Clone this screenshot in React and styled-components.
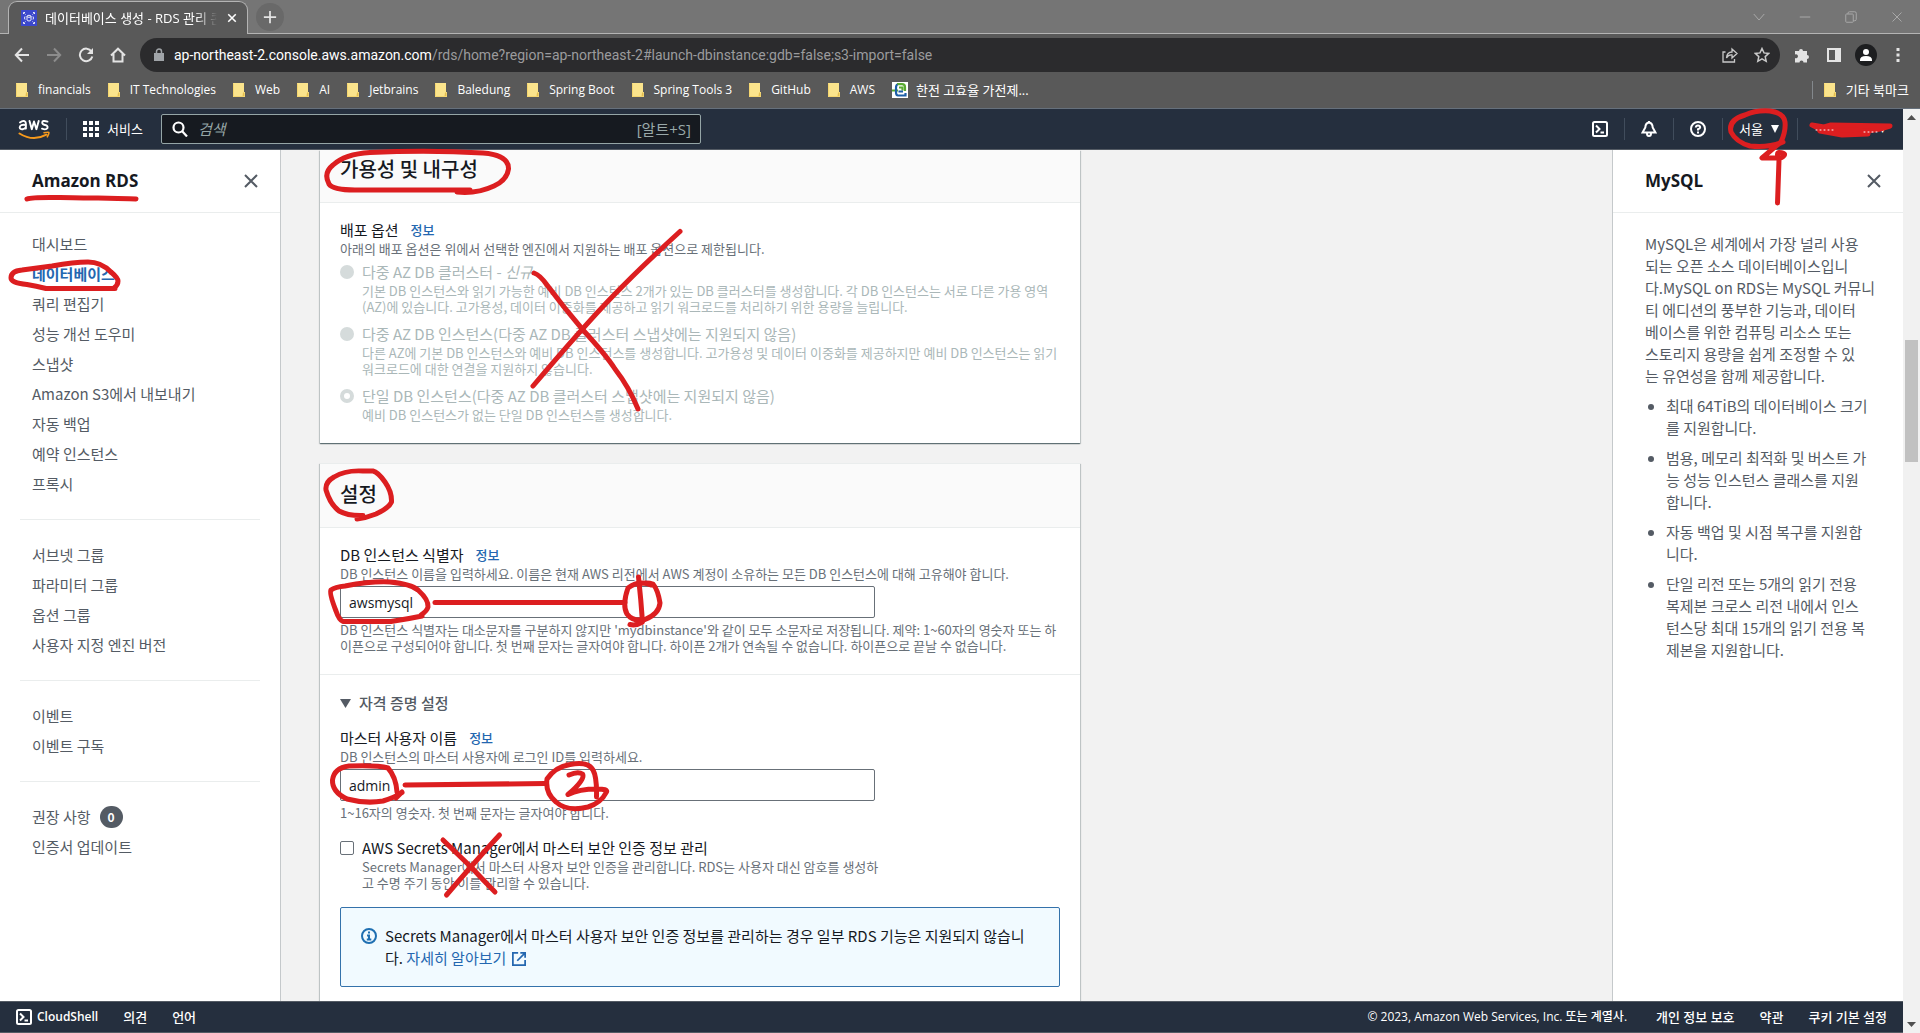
import React from 'react';
import styled, { createGlobalStyle, css } from 'styled-components';

const C = {
  strip: '#757575',
  toolbar: '#595959',
  omnibox: '#2b2b2d',
  nav: '#252f3e',
  navLine: '#414d5c',
  page: '#f2f2f2',
  text: '#16191f',
  body: '#545b64',
  hint: '#687078',
  disabled: '#aab7b8',
  line: '#eaeded',
  link: '#2467b0',
  pen: '#dc1e20',
};

const Global = createGlobalStyle`
  *, *::before, *::after { box-sizing: border-box; }
  body {
    margin: 0;
    overflow: hidden;
    background: ${C.page};
    color: ${C.text};
    font: 15px/22px 'Open Sans', 'Noto Sans CJK KR', sans-serif;
  }
  button, input { font: inherit; color: inherit; }
  button { padding: 0; border: 0; background: none; cursor: pointer; }
  a { text-decoration: none; color: inherit; }
  h1, h2, p, ul { margin: 0; padding: 0; }
  ul { list-style: none; }
  svg { display: block; flex: none; }
`;

const Shell = styled.div`
  position: relative;
  display: flex;
  flex-direction: column;
  height: 100vh;
`;

/* ---------- browser window ---------- */

const TabStrip = styled.div`
  display: flex;
  align-items: center;
  flex: none;
  height: 34px;
  padding: 0 0 0 8px;
  background: ${C.strip};
  border-bottom: 1px solid #b4b4b4;
`;

const Tab = styled.div`
  position: relative;
  display: flex;
  align-items: center;
  gap: 8px;
  width: 240px;
  height: 33px;
  margin: 1px 0 0;
  padding: 0 8px 0 12px;
  background: ${C.toolbar};
  border: 1px solid #b4b4b4;
  border-bottom: 0;
  border-radius: 9px 9px 0 0;
  color: #fff;
  font-size: 13px;
  line-height: 18px;
  &::after {
    content: '';
    position: absolute;
    left: 0;
    right: 0;
    bottom: -1px;
    height: 1px;
    background: ${C.toolbar};
  }
`;

const TabTitle = styled.span`
  flex: 1;
  overflow: hidden;
  white-space: nowrap;
  mask-image: linear-gradient(90deg, #000 88%, transparent);
`;

const IconButton = styled.button`
  display: flex;
  align-items: center;
  justify-content: center;
  flex: none;
  width: ${(p) => p.$w || 32}px;
  height: ${(p) => p.$h || 28}px;
  color: ${(p) => p.$color || '#e4e4e4'};
`;

const NewTab = styled(IconButton)`
  margin-left: 8px;
  border-radius: 50%;
  background: #696969;
`;

const WindowControls = styled.div`
  display: flex;
  margin-left: auto;
`;

const Toolbar = styled.div`
  display: flex;
  align-items: center;
  flex: none;
  height: 42px;
  padding: 0 6px;
  background: ${C.toolbar};
`;

const Omnibox = styled.div`
  display: flex;
  align-items: center;
  flex: 1;
  height: 34px;
  margin: 0 6px;
  padding: 0 2px 0 14px;
  gap: 10px;
  border-radius: 17px;
  background: ${C.omnibox};
  color: #9b9b9d;
  font-family: Roboto, 'Noto Sans CJK KR', sans-serif;
  font-size: 14px;
  line-height: 20px;
`;

const OmniboxActions = styled.div`
  display: flex;
`;

const Url = styled.span`
  flex: 1;
  b { font-weight: 400; color: #fff; }
`;

const Bookmarks = styled.nav`
  display: flex;
  align-items: center;
  gap: 17px;
  flex: none;
  height: 33px;
  padding: 0 11px 4px 16px;
  background: ${C.toolbar};
  border-bottom: 1px solid #66707c;
  color: #fff;
  font-size: 12px;
  line-height: 18px;
`;

const Bookmark = styled.a`
  display: flex;
  align-items: center;
  gap: ${(p) => (p.$site ? 8 : 10)}px;
  white-space: nowrap;
  font-size: ${(p) => (p.$ko ? 13 : 12)}px;
`;

const OtherBookmarks = styled.div`
  margin-left: auto;
  padding-left: 11px;
  border-left: 1px solid #83888c;
`;

const Viewport = styled.div`
  display: flex;
  flex: 1;
  min-height: 0;
`;

const Page = styled.div`
  display: flex;
  flex-direction: column;
  flex: 1;
  min-width: 0;
`;

const ScrollTrack = styled.div`
  display: flex;
  flex-direction: column;
  align-items: center;
  flex: none;
  width: 17px;
  background: #f1f1f1;
  color: #505050;
`;

const ScrollSpace = styled.div`
  flex: ${(p) => p.$grow};
`;

const ScrollThumb = styled.div`
  width: 13px;
  height: 122px;
  background: #c1c1c1;
`;

/* ---------- console navigation ---------- */

const NavBar = styled.header`
  display: flex;
  align-items: center;
  flex: none;
  height: 41px;
  padding: 0 10px 0 18px;
  background: ${C.nav};
  border-bottom: 1px solid #545b64;
  color: #fff;
  font-size: 13px;
`;

const NavDivider = styled.i`
  width: 1px;
  height: 22px;
  margin: 0 ${(p) => p.$space || 16}px;
  background: ${C.navLine};
`;

const NavButton = styled.button`
  display: flex;
  align-items: center;
  gap: 8px;
  padding-right: ${(p) => p.$pad || 0}px;
`;

const Search = styled.label`
  display: flex;
  align-items: center;
  gap: 10px;
  width: 540px;
  height: 30px;
  margin: 0 auto 0 18px;
  padding: 0 9px 0 10px;
  border: 1px solid #95a5a6;
  border-radius: 2px;
  background: #161a20;
  color: #99a8a9;
  font-size: 15px;
`;

const SearchInput = styled.input`
  flex: 1;
  min-width: 0;
  padding: 0;
  border: 0;
  outline: 0;
  background: none;
  font-style: italic;
  &::placeholder { color: #95a5a6; opacity: 1; }
`;

const Account = styled.button`
  width: 83px;
  height: 22px;
  padding-right: 8px;
  text-align: right;
  font-size: 10px;
`;

/* ---------- page columns ---------- */

const Columns = styled.div`
  display: flex;
  flex: 1;
  min-height: 0;
  font-family: 'Noto Sans CJK KR', 'Open Sans', sans-serif;
`;

const SidePanel = styled.aside`
  flex: none;
  width: ${(p) => p.$w}px;
  overflow: hidden;
  background: #fff;
  color: ${C.body};
  ${(p) => (p.$right
    ? css`border-left: 1px solid #c5c9cb;`
    : css`border-right: 1px solid #c5c9cb;`)}
`;

const PanelHead = styled.div`
  display: flex;
  align-items: center;
  justify-content: space-between;
  height: 63px;
  padding: 0 16px 0 32px;
  border-bottom: 1px solid ${C.line};
`;

const PanelTitle = styled.h2`
  color: ${C.text};
  font-family: 'Open Sans', 'Noto Sans CJK KR', sans-serif;
  font-size: 17px;
  line-height: 24px;
  font-weight: 700;
`;

const NavGroup = styled.ul`
  display: grid;
  gap: 8px;
  margin: 0 20px;
  padding: ${(p) => (p.$first ? 20 : 24)}px 0 24px 12px;
  & + & { border-top: 1px solid ${C.line}; }
`;

const NavLink = styled.a`
  display: flex;
  align-items: center;
  gap: 9px;
  height: 22px;
  ${(p) => p.$active && css`color: ${C.link}; font-weight: 700;`}
`;

const Badge = styled.span`
  display: grid;
  place-items: center;
  width: 23px;
  height: 22px;
  border-radius: 11px;
  background: ${C.body};
  color: #fff;
  font-size: 12px;
  line-height: 16px;
  font-weight: 700;
`;

const HelpBody = styled.div`
  display: grid;
  gap: 8px;
  padding: 20px 24px 20px 32px;
`;

const HelpList = styled.ul`
  display: grid;
  gap: 8px;
  padding: 0 8px 0 21px;
  list-style: disc;
`;

const Main = styled.main`
  display: flex;
  flex-direction: column;
  gap: 20px;
  flex: 1;
  min-width: 0;
  overflow: hidden;
  padding: 0 39px;
`;

const Card = styled.section`
  flex: none;
  max-width: 760px;
  background: #fff;
  border-top: ${(p) => (p.$scrolled ? 0 : 1)}px solid ${C.line};
  box-shadow: 0 1px 1px rgba(0, 28, 36, 0.45), 1px 1px 1px rgba(0, 28, 36, 0.15),
    -1px 1px 1px rgba(0, 28, 36, 0.15);
`;

const CardHead = styled.div`
  padding: ${(p) => (p.$scrolled ? 7 : 18)}px 20px 21px;
  background: #fafafa;
  border-bottom: 1px solid ${C.line};
`;

const CardTitle = styled.h2`
  font-size: 20px;
  line-height: 24px;
  font-weight: 500;
`;

const CardBody = styled.div`
  padding: 16px 20px 20px;
  & + & { border-top: 1px solid ${C.line}; }
`;

const LabelRow = styled.div`
  display: flex;
  align-items: center;
  gap: 12px;
  height: 22px;
`;

const InfoLink = styled.a`
  color: ${C.link};
  font-size: 13px;
  font-weight: 500;
`;

const Hint = styled.p`
  color: ${(p) => (p.$off ? C.disabled : C.hint)};
  font-size: 13px;
  line-height: 16px;
`;

const Field = styled.div`
  display: grid;
  gap: 4px;
  margin-top: ${(p) => p.$top || 0}px;
`;

const TextInput = styled.input`
  width: 100%;
  max-width: 535px;
  height: 32px;
  padding: 0 8px;
  border: 1px solid ${C.hint};
  border-radius: 2px;
  background: #fff;
  font-family: 'Open Sans', 'Noto Sans CJK KR', sans-serif;
  font-size: 14px;
`;

const Choices = styled.div`
  display: grid;
  gap: 8px;
`;

const Choice = styled.label`
  display: grid;
  grid-template-columns: 14px 1fr;
  column-gap: 8px;
  align-items: center;
  max-width: ${(p) => (p.$narrow ? '544px' : 'none')};
  margin-top: ${(p) => (p.$narrow ? 16 : 0)}px;
  color: ${(p) => (p.$off ? C.disabled : C.text)};
  ${Hint} { grid-column: 2; }
`;

const Radio = styled.input`
  appearance: none;
  width: 14px;
  height: 14px;
  margin: 0;
  border-radius: 50%;
  background: #d5dbdb;
  &:checked { background: #fff; border: 4px solid #d5dbdb; }
`;

const Check = styled.input`
  appearance: none;
  width: 14px;
  height: 14px;
  margin: 0;
  border: 1px solid ${C.hint};
  border-radius: 2px;
  background: #fff;
`;

const Toggle = styled.button`
  display: flex;
  align-items: center;
  gap: 8px;
  height: 24px;
  color: ${C.body};
  font-weight: 500;
`;

const Alert = styled.div`
  display: flex;
  gap: 8px;
  margin-top: 16px;
  padding: 17px 28px 17px 20px;
  border: 1px solid #3472ab;
  border-radius: 2px;
  background: #f1faff;
`;

const AlertIcon = styled.span`
  padding-top: 3px;
  color: #1f6fb2;
`;

const AlertLink = styled.a`
  color: ${C.link};
  svg { display: inline-block; margin-left: 6px; vertical-align: -2px; }
`;

const Footer = styled.footer`
  display: flex;
  align-items: center;
  gap: 25px;
  flex: none;
  height: 32px;
  padding: 0 16px;
  background: ${C.nav};
  border-top: 1px solid #545b64;
  border-bottom: 1px solid #545b64;
  color: #fff;
  font-size: 12px;
  font-weight: 500;
`;

const Copyright = styled.span`
  margin: 0 4px 0 auto;
`;

const FooterLink = styled.a`
  display: flex;
  align-items: center;
  gap: 5px;
  font-size: ${(p) => (p.$latin ? 12 : 13)}px;
  font-weight: ${(p) => (p.$latin ? 600 : 500)};
`;

const Ink = styled.svg`
  position: absolute;
  top: 0;
  left: 0;
  pointer-events: none;
`;

/* ---------- icons ---------- */

const Icon = ({ size = 16, w = 2, children, ...rest }) => (
  <svg width={size} height={size} viewBox="0 0 16 16" fill="none" stroke="currentColor"
    strokeWidth={w} aria-hidden="true" {...rest}>{children}</svg>
);

const Folder = () => (
  <svg width="12" height="14" viewBox="0 0 12 14" aria-hidden="true">
    <path d="M0 0h11v9h1v5H0z" fill="#fbe48c" />
    <path d="M10 9.5h1.5v4H9.5z" fill="#e3bd4f" />
    <path d="M.5.5v13h11" fill="none" stroke="#f5d66f" />
  </svg>
);

const RdsIcon = () => (
  <svg width="16" height="16" viewBox="0 0 16 16" fill="none" stroke="#fff" aria-hidden="true">
    <rect width="16" height="16" fill="#3b48cc" stroke="none" />
    <path d="M2.500 4V2.500H4M12 2.500h1.500V4M13.500 12v1.500H12M4 13.500H2.500V12M3.500 3.500l1 1M12.500 3.500l-1 1M12.500 12.500l-1-1M3.500 12.500l1-1" strokeWidth=".9" />
    <ellipse cx="8" cy="6.300" rx="2" ry="1" strokeWidth=".9" />
    <path d="M6 6.300v3.700c0 1.300 4 1.300 4 0V6.300M4 6.500Q3 8 4 9.500M12 6.500q1 1.500 0 3" strokeWidth=".9" />
  </svg>
);

const SiteIcon = () => (
  <svg width="16" height="16" viewBox="0 0 16 16" fill="none" aria-hidden="true">
    <rect width="16" height="16" fill="#fff" />
    <path d="M5 2.200h5q3 0 3 3V9" stroke="#5aab32" strokeWidth="2.200" />
    <path d="M0 8.500h6M7 5.500h3.500v3" stroke="#5aab32" strokeWidth="2.200" />
    <path d="M5.500 2.500Q4 3 4 6v4q0 3.500 2 3.500h7.500V11M6.500 9.500h4.500" stroke="#1d5fa8" strokeWidth="2.200" />
  </svg>
);

const Close = ({ size = 16, w = 2 }) => (
  <Icon size={size} w={w}><path d="M2 2l12 12M14 2L2 14" /></Icon>
);

const ShellIcon = ({ w = 2 }) => (
  <Icon w={w}><rect x="1" y="1" width="14" height="14" rx="1.500" /><path d="M4 4.500L7.500 8 4 11.500M8.500 11.500H12" /></Icon>
);

const AwsLogo = () => (
  <svg width="32" height="21" viewBox="0 0 32 21" fill="none" strokeLinecap="round" strokeLinejoin="round" role="img" aria-label="aws">
    <g stroke="#fff" strokeWidth="1.900">
      <path d="M2 3.500Q4.500 1.500 6.500 2.200 8 2.900 7.900 5v4.500M7.900 6Q2 5 1.700 8.300 2 10.800 5 10.200 7 9.700 7.900 7.800" />
      <path d="M11.500 2l2.300 8.200L16 2.500l2.400 7.700L20.700 2" />
      <path d="M29.500 2.600Q24.200.900 24.200 3.700 24.300 5.300 27 6 30.200 6.800 29.500 9 28 11.300 24 9.700" />
    </g>
    <path d="M1.500 14.500Q15 23 28.500 15.700" stroke="#f79a1c" strokeWidth="2" />
    <path d="M26 13.700q5-1 5 0t-1.700 4.200" stroke="#f79a1c" strokeWidth="1.500" />
  </svg>
);

const Caret = ({ width = 10, height = 8 }) => (
  <svg width={width} height={height} viewBox="0 0 10 8" preserveAspectRatio="none" aria-hidden="true"><path d="M0 0h10L5 8z" fill="currentColor" /></svg>
);

/* ---------- data ---------- */

const bookmarks = ['financials', 'IT Technologies', 'Web', 'AI', 'Jetbrains', 'Baledung',
  'Spring Boot', 'Spring Tools 3', 'GitHub', 'AWS'];

const groups = [
  ['대시보드', '데이터베이스', '쿼리 편집기', '성능 개선 도우미', '스냅샷', 'Amazon S3에서 내보내기',
    '자동 백업', '예약 인스턴스', '프록시'],
  ['서브넷 그룹', '파라미터 그룹', '옵션 그룹', '사용자 지정 엔진 버전'],
  ['이벤트', '이벤트 구독'],
  ['권장 사항', '인증서 업데이트'],
];

const deployments = [
  {
    label: <>다중 AZ DB 클러스터 - <em>신규</em></>,
    hint: '기본 DB 인스턴스와 읽기 가능한 예비 DB 인스턴스 2개가 있는 DB 클러스터를 생성합니다. 각 DB 인스턴스는 서로 다른 가용 영역(AZ)에 있습니다. 고가용성, 데이터 이중화를 제공하고 읽기 워크로드를 처리하기 위한 용량을 늘립니다.',
  },
  {
    label: '다중 AZ DB 인스턴스(다중 AZ DB 클러스터 스냅샷에는 지원되지 않음)',
    hint: '다른 AZ에 기본 DB 인스턴스와 예비 DB 인스턴스를 생성합니다. 고가용성 및 데이터 이중화를 제공하지만 예비 DB 인스턴스는 읽기 워크로드에 대한 연결을 지원하지 않습니다.',
  },
  {
    label: '단일 DB 인스턴스(다중 AZ DB 클러스터 스냅샷에는 지원되지 않음)',
    hint: '예비 DB 인스턴스가 없는 단일 DB 인스턴스를 생성합니다.',
    checked: true,
  },
];

const features = [
  '최대 64TiB의 데이터베이스 크기를 지원합니다.',
  '범용, 메모리 최적화 및 버스트 가능 성능 인스턴스 클래스를 지원합니다.',
  '자동 백업 및 시점 복구를 지원합니다.',
  '단일 리전 또는 5개의 읽기 전용 복제본 크로스 리전 내에서 인스턴스당 최대 15개의 읽기 전용 복제본을 지원합니다.',
];

const strokes = [
  'M27 199Q32 197 60 197.500T98 198T136 199',
  'M115 288.500H46Q36 286 27 284.500Q11 283 11 278Q11 271 22 270L52 266Q74 262 88 262Q101 262 111 272Q118 278 118 281Q118 285 114 288',
  'M470 190H355Q333 190 329 184Q323 173 333 165Q345 154 370 152.500Q430 150 483 153Q509 155 508.500 169Q507 180 494 186Q477 194 457 192',
  'M680 231.500Q640 268 612 297T533 386',
  'M534 273Q540 275 547 285Q565 309 583 330Q606 355 615 369Q629 387 638 409',
  'M363 515.500Q348 516 339 511Q330 504 326 490Q325 482 334 477Q345 470 363 471H373Q378 472 385 482Q392 492 391.500 502Q389 508 376 514Q366 518 357 519',
  'M422 616Q408 619 391 621.500H343Q339 620 336 611Q329 593 331 590Q335 587 345 586Q372 581 390 582Q411 584 418 590Q429 600 428 607Q427 611 421 615',
  'M435 602.500H625',
  'M651 585Q639 580 628 588Q622 605 627 614Q633 622 645 619.500Q659 614 660 603Q658 590 653 584Q647 582 638 584',
  'M638.500 577Q641 600 642.500 622Q636 626 630 624.500',
  'M397 792Q396 777 388 768Q378 765 349 766Q334 768 332.500 780Q332 792 347 799Q366 804 383 801Q396 797 402 792.500M396 798L402 792',
  'M405 785L545 783.500',
  'M569 775Q578 771 582.500 774Q586 779 568 794.500Q579 789 597 789Q608 789 606.500 792Q601 803 588 807Q567 812 556 802Q545 793 547 779Q555 767 570 764.500Q588 761 593 770Q597 777 596.500 797',
  'M443 840L472 868Q484 881 495 892',
  'M499.500 835Q480 856 446.500 895',
  'M1783 142Q1769 148 1750 146Q1736 142 1731 132Q1728 120 1745 115Q1756 110 1770 111Q1784 113 1785 122Q1786 131 1781 142L1762 158L1781 158Q1789 153 1779 152.500Q1776 153 1779 160L1777.500 203',
];

export default function App() {
  return (
    <>
      <Global />
      <Shell>
        <TabStrip>
          <Tab>
            <RdsIcon />
            <TabTitle>데이터베이스 생성 - RDS 관리 콘솔</TabTitle>
            <IconButton $w={14} $h={18} $color="#fff" aria-label="탭 닫기"><Close size={10} w={2.500} /></IconButton>
          </Tab>
          <NewTab $w={28} aria-label="새 탭"><Icon size={14}><path d="M8 1v14M1 8h14" /></Icon></NewTab>
          <WindowControls>
            <IconButton $w={46} $color="#aaa" aria-label="탭 검색"><Icon size={12} w={1.300}><path d="M1 4l7 8 7-8" /></Icon></IconButton>
            <IconButton $w={46} $color="#aaa" aria-label="최소화"><Icon size={12} w={1.300}><path d="M1 8h14" /></Icon></IconButton>
            <IconButton $w={46} $color="#aaa" aria-label="이전 크기로"><Icon size={12} w={1.300}><rect x="1" y="4" width="10" height="11" rx="1" /><path d="M4 4V3q0-2 2-2h7q2 0 2 2v8q0 2-2 2h-2" /></Icon></IconButton>
            <IconButton $w={46} $color="#aaa" aria-label="닫기"><Close size={12} w={1.300} /></IconButton>
          </WindowControls>
        </TabStrip>

        <Toolbar>
          <IconButton aria-label="뒤로"><Icon><path d="M15 8H2M8 1.500L1.800 8 8 14.500" /></Icon></IconButton>
          <IconButton $color="#8c8c8c" aria-label="앞으로"><Icon><path d="M1 8h13M8 1.500L14.200 8 8 14.500" /></Icon></IconButton>
          <IconButton aria-label="새로고침"><Icon><path d="M13.500 4.500A6.300 6.300 0 1 0 14.300 9.500" /><path d="M15 1v6H9z" fill="currentColor" stroke="none" /></Icon></IconButton>
          <IconButton aria-label="홈"><Icon><path d="M1 8.500L8 1.700l7 6.800M3.500 7v7.500h9V7" /></Icon></IconButton>
          <Omnibox>
            <svg width="10" height="14" viewBox="0 0 10 14" aria-hidden="true"><path d="M0 5h10v8H0z" fill="#a0a4a8" /><path d="M2.500 5.500V3.500a2.500 2.500 0 0 1 5 0v2" fill="none" stroke="#a0a4a8" strokeWidth="1.500" /></svg>
            <Url><b>ap-northeast-2.console.aws.amazon.com</b>/rds/home?region=ap-northeast-2#launch-dbinstance:gdb=false;s3-import=false</Url>
            <OmniboxActions>
              <IconButton $color="#c9c9c9" aria-label="공유"><Icon w={1.300}><path d="M3.500 5H1v10h11.500V12M4.500 11Q5 5 10 5V2l5 4.500-5 4.500V8Q6.500 7.500 4.500 11z" /></Icon></IconButton>
              <IconButton $color="#c9c9c9" aria-label="북마크에 추가"><Icon w={1.500}><path d="M8 1.500l2 4.400 4.800.500-3.600 3.200 1 4.700L8 11.900l-4.200 2.400 1-4.700L1.200 6.400 6 5.900z" /></Icon></IconButton>
            </OmniboxActions>
          </Omnibox>
          <IconButton aria-label="확장 프로그램"><Icon><path d="M1 4h4a2 2 0 1 1 4 0h4v4a2 2 0 1 1 0 4v3.500H9.500a2 2 0 1 0-4 0H1V11a2 2 0 1 0 0-3.500z" fill="currentColor" stroke="none" /></Icon></IconButton>
          <IconButton aria-label="측면 패널"><Icon><path d="M2 2h12v12H2z" /><path d="M10 2h4v12h-4z" fill="currentColor" /></Icon></IconButton>
          <IconButton aria-label="프로필">
            <svg width="22" height="22" viewBox="0 0 22 22" aria-hidden="true"><circle cx="11" cy="11" r="11" fill="#1d1e20" /><circle cx="11" cy="8" r="3" fill="#fff" /><path d="M5 16q0-4 6-4t6 4v1H5z" fill="#fff" /></svg>
          </IconButton>
          <IconButton aria-label="메뉴"><Icon><path d="M8 1v3M8 6.500v3M8 12v3" strokeWidth="3" /></Icon></IconButton>
        </Toolbar>

        <Bookmarks>
          {bookmarks.map((b) => <Bookmark key={b} href="#"><Folder />{b}</Bookmark>)}
          <Bookmark href="#" $site $ko><SiteIcon />한전 고효율 가전제...</Bookmark>
          <OtherBookmarks><Bookmark href="#" $ko><Folder />기타 북마크</Bookmark></OtherBookmarks>
        </Bookmarks>

        <Viewport>
          <Page>
            <NavBar>
              <a href="#"><AwsLogo /></a>
              <NavDivider />
              <NavButton>
                <Icon><path d="M0 2h4M6 2h4M12 2h4M0 8h4M6 8h4M12 8h4M0 14h4M6 14h4M12 14h4" strokeWidth="4" /></Icon>
                서비스
              </NavButton>
              <Search>
                <Icon w={2.200}><circle cx="6.500" cy="6.500" r="5" stroke="#fff" /><path d="M10 10l5 5.500" stroke="#fff" /></Icon>
                <SearchInput placeholder="검색" aria-label="검색" />
                [알트+S]
              </Search>
              <NavButton aria-label="CloudShell"><ShellIcon /></NavButton>
              <NavDivider />
              <NavButton aria-label="알림"><Icon><path d="M8 1.500Q4.500 2 4.300 6.500L1.500 11.500h13L11.700 6.500Q11.500 2 8 1.500zM8 0v2M6 12.500q0 2.500 2 2.500t2-2.500" /></Icon></NavButton>
              <NavDivider />
              <NavButton aria-label="도움말"><Icon><circle cx="8" cy="8" r="7" /><path d="M5.800 6.500Q6 4.400 8 4.400t2.200 1.900Q10.200 7.500 8 8.300V9.500M8 10.500v2" /></Icon></NavButton>
              <NavDivider />
              <NavButton $pad={6}>서울<Caret width={8} /></NavButton>
              <NavDivider $space={12} />
              <Account aria-label="계정">▾</Account>
            </NavBar>

            <Columns>
              <SidePanel $w={281}>
                <PanelHead>
                  <PanelTitle>Amazon RDS</PanelTitle>
                  <IconButton $w={26} $color={C.body} aria-label="탐색 닫기"><Close /></IconButton>
                </PanelHead>
                {groups.map((items, g) => (
                  <NavGroup key={g} $first={g === 0}>
                    {items.map((t) => (
                      <li key={t}>
                        <NavLink href="#" $active={t === '데이터베이스'}>
                          {t}
                          {t === '권장 사항' && <Badge>0</Badge>}
                        </NavLink>
                      </li>
                    ))}
                  </NavGroup>
                ))}
              </SidePanel>

              <Main>
                <Card $scrolled>
                  <CardHead $scrolled><CardTitle>가용성 및 내구성</CardTitle></CardHead>
                  <CardBody>
                    <LabelRow>배포 옵션 <InfoLink href="#">정보</InfoLink></LabelRow>
                    <Field>
                      <Hint>아래의 배포 옵션은 위에서 선택한 엔진에서 지원하는 배포 옵션으로 제한됩니다.</Hint>
                      <Choices>
                        {deployments.map((d, i) => (
                          <Choice key={i} $off>
                            <Radio type="radio" name="deployment" disabled defaultChecked={d.checked} />
                            <span>{d.label}</span>
                            <Hint $off>{d.hint}</Hint>
                          </Choice>
                        ))}
                      </Choices>
                    </Field>
                  </CardBody>
                </Card>

                <Card>
                  <CardHead><CardTitle>설정</CardTitle></CardHead>
                  <CardBody>
                    <LabelRow>
                      <label htmlFor="identifier">DB 인스턴스 식별자</label>
                      <InfoLink href="#">정보</InfoLink>
                    </LabelRow>
                    <Field>
                      <Hint>DB 인스턴스 이름을 입력하세요. 이름은 현재 AWS 리전에서 AWS 계정이 소유하는 모든 DB 인스턴스에 대해 고유해야 합니다.</Hint>
                      <TextInput id="identifier" defaultValue="awsmysql" />
                      <Hint>DB 인스턴스 식별자는 대소문자를 구분하지 않지만 'mydbinstance'와 같이 모두 소문자로 저장됩니다. 제약: 1~60자의 영숫자 또는 하이픈으로 구성되어야 합니다. 첫 번째 문자는 글자여야 합니다. 하이픈 2개가 연속될 수 없습니다. 하이픈으로 끝날 수 없습니다.</Hint>
                    </Field>
                  </CardBody>
                  <CardBody>
                    <Toggle aria-expanded="true"><Caret width={11} height={9} />자격 증명 설정</Toggle>
                    <Field $top={12}>
                      <div>
                        <LabelRow>
                          <label htmlFor="master">마스터 사용자 이름</label>
                          <InfoLink href="#">정보</InfoLink>
                        </LabelRow>
                        <Hint>DB 인스턴스의 마스터 사용자에 로그인 ID를 입력하세요.</Hint>
                      </div>
                      <TextInput id="master" defaultValue="admin" />
                      <Hint>1~16자의 영숫자. 첫 번째 문자는 글자여야 합니다.</Hint>
                    </Field>
                    <Choice $narrow>
                      <Check type="checkbox" />
                      <span>AWS Secrets Manager에서 마스터 보안 인증 정보 관리</span>
                      <Hint>Secrets Manager에서 마스터 사용자 보안 인증을 관리합니다. RDS는 사용자 대신 암호를 생성하고 수명 주기 동안 이를 관리할 수 있습니다.</Hint>
                    </Choice>
                    <Alert>
                      <AlertIcon>
                        <Icon><circle cx="8" cy="8" r="7" /><path d="M8 3.500v2M6 7.500h2v4M5.800 11.500h4.500" /></Icon>
                      </AlertIcon>
                      <p>
                        Secrets Manager에서 마스터 사용자 보안 인증 정보를 관리하는 경우 일부 RDS 기능은 지원되지 않습니다.{' '}
                        <AlertLink href="#">자세히 알아보기<Icon size={14}><path d="M7 1H1v14h14V9M9.500 1H15v5.500M15 1L6 10" /></Icon></AlertLink>
                      </p>
                    </Alert>
                  </CardBody>
                </Card>
              </Main>

              <SidePanel $w={291} $right>
                <PanelHead>
                  <PanelTitle>MySQL</PanelTitle>
                  <IconButton $w={26} $color={C.body} aria-label="도움말 닫기"><Close /></IconButton>
                </PanelHead>
                <HelpBody>
                  <p>
                    MySQL은 세계에서 가장 널리 사용<br />
                    되는 오픈 소스 데이터베이스입니<br />
                    다.MySQL on RDS는 MySQL 커뮤니<br />
                    티 에디션의 풍부한 기능과, 데이터<br />
                    베이스를 위한 컴퓨팅 리소스 또는<br />
                    스토리지 용량을 쉽게 조정할 수 있<br />
                    는 유연성을 함께 제공합니다.
                  </p>
                  <HelpList>{features.map((f) => <li key={f}>{f}</li>)}</HelpList>
                </HelpBody>
              </SidePanel>
            </Columns>

            <Footer>
              <FooterLink href="#" $latin><ShellIcon />CloudShell</FooterLink>
              <FooterLink href="#">의견</FooterLink>
              <FooterLink href="#">언어</FooterLink>
              <Copyright>© 2023, Amazon Web Services, Inc. 또는 계열사.</Copyright>
              <FooterLink href="#">개인 정보 보호</FooterLink>
              <FooterLink href="#">약관</FooterLink>
              <FooterLink href="#">쿠키 기본 설정</FooterLink>
            </Footer>
          </Page>

          <ScrollTrack aria-hidden="true">
            <svg width="17" height="17" viewBox="0 0 17 17"><path d="M4 11l4.500-5 4.500 5z" fill="currentColor" /></svg>
            <ScrollSpace $grow={214} />
            <ScrollThumb />
            <ScrollSpace $grow={554} />
            <svg width="17" height="17" viewBox="0 0 17 17"><path d="M4 6l4.500 5L13 6z" fill="currentColor" /></svg>
          </ScrollTrack>
        </Viewport>

        <Ink width="1920" height="1033" viewBox="0 0 1920 1033" fill="none" stroke={C.pen}
          strokeWidth="5" strokeLinecap="round" strokeLinejoin="round" aria-hidden="true">
          {strokes.map((d) => <path key={d} d={d} />)}
          <path d="M1812 125L1824 127L1831 125L1890 126L1880 129L1868 131V134L1842 135L1820 131L1818 128z" fill={C.pen} />
          <path d="M1816 130h20M1864 132h14" stroke="#fff" strokeWidth="1" strokeDasharray="1 3" />
        </Ink>
      </Shell>
    </>
  );
}
